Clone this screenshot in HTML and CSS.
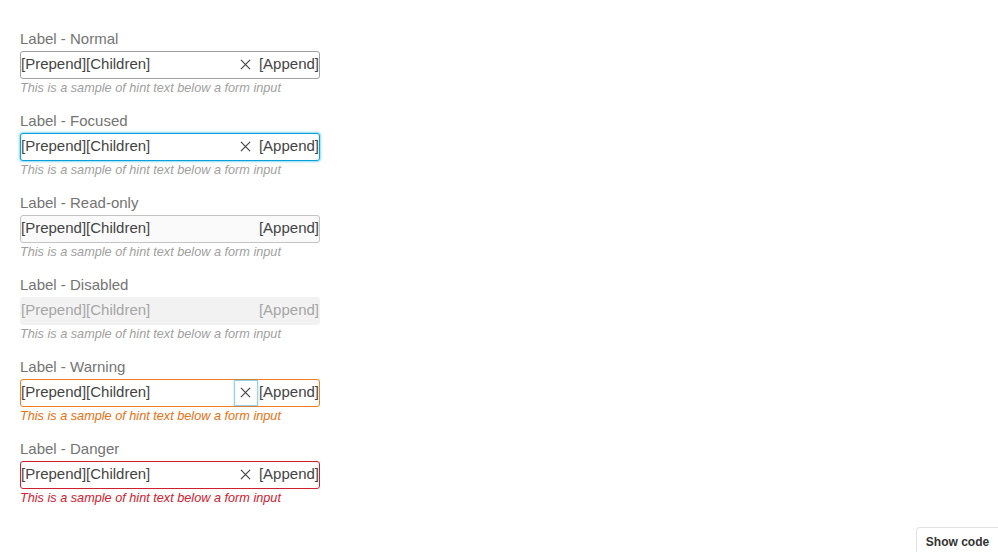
FILE: index.html
```html
<!DOCTYPE html>
<html>
<head>
<meta charset="utf-8">
<link rel="stylesheet" href="styles.css">
</head>
<body>
<div class="page">
  <div class="group">
    <div class="label">Label - Normal</div>
    <div class="field">
      <span class="text">[Prepend][Children]</span>
      <span class="clear"><svg viewBox="0 0 12 12" width="12" height="12"><path d="M1 1L11 11M11 1L1 11" stroke="currentColor" stroke-width="1.3" fill="none"/></svg></span>
      <span class="append">[Append]</span>
    </div>
    <div class="hint">This is a sample of hint text below a form input</div>
  </div>
  <div class="group">
    <div class="label">Label - Focused</div>
    <div class="field focused">
      <span class="text">[Prepend][Children]</span>
      <span class="clear"><svg viewBox="0 0 12 12" width="12" height="12"><path d="M1 1L11 11M11 1L1 11" stroke="currentColor" stroke-width="1.3" fill="none"/></svg></span>
      <span class="append">[Append]</span>
    </div>
    <div class="hint">This is a sample of hint text below a form input</div>
  </div>
  <div class="group">
    <div class="label">Label - Read-only</div>
    <div class="field readonly">
      <span class="text">[Prepend][Children]</span>
      <span class="append">[Append]</span>
    </div>
    <div class="hint">This is a sample of hint text below a form input</div>
  </div>
  <div class="group">
    <div class="label">Label - Disabled</div>
    <div class="field disabled">
      <span class="text">[Prepend][Children]</span>
      <span class="append">[Append]</span>
    </div>
    <div class="hint">This is a sample of hint text below a form input</div>
  </div>
  <div class="group">
    <div class="label">Label - Warning</div>
    <div class="field warning">
      <span class="text">[Prepend][Children]</span>
      <span class="clear ring"><svg viewBox="0 0 12 12" width="12" height="12"><path d="M1 1L11 11M11 1L1 11" stroke="currentColor" stroke-width="1.3" fill="none"/></svg></span>
      <span class="append">[Append]</span>
    </div>
    <div class="hint hint-warning">This is a sample of hint text below a form input</div>
  </div>
  <div class="group">
    <div class="label">Label - Danger</div>
    <div class="field danger">
      <span class="text">[Prepend][Children]</span>
      <span class="clear"><svg viewBox="0 0 12 12" width="12" height="12"><path d="M1 1L11 11M11 1L1 11" stroke="currentColor" stroke-width="1.3" fill="none"/></svg></span>
      <span class="append">[Append]</span>
    </div>
    <div class="hint hint-danger">This is a sample of hint text below a form input</div>
  </div>
</div>
<button class="show-code">Show code</button>
</body>
</html>
```
FILE: styles.css
```css
html, body {
  margin: 0;
  background: #fff;
  font-family: "Liberation Sans", Arial, sans-serif;
}
.page {
  padding: 29px 20px;
  width: 300px;
}
.group {
  margin-bottom: 15px;
}
.label {
  font-size: 15px;
  line-height: 20px;
  color: #747474;
  margin-bottom: 2px;
}
.field {
  box-sizing: border-box;
  height: 28px;
  border: 1px solid #a0a0a0;
  border-radius: 3px;
  display: flex;
  align-items: center;
  padding-bottom: 3px;
  font-size: 15px;
  color: #444;
  background: #fff;
}
.text {
  flex: 1;
  white-space: nowrap;
}
.clear {
  display: flex;
  align-items: center;
  justify-content: center;
  width: 24px;
  height: 26px;
  margin-bottom: -3px;
  padding-bottom: 1px;
  color: #444;
  box-sizing: border-box;
}
.clear svg {
  width: 11px;
  height: 11px;
}
.clear.ring {
  border: 1px solid #8fd3ef;
  box-shadow: 0 0 2px rgba(0, 160, 220, 0.35);
}
.append {
  margin-left: 1px;
  white-space: nowrap;
}
.focused {
  border-color: #0a9fd8;
  box-shadow: 0 0 2px 1px rgba(0, 170, 230, 0.45);
}
.readonly {
  background: #fafafa;
  border-color: #c4c4c4;
}
.disabled {
  background: #f2f2f2;
  border-color: #f2f2f2;
  color: #a6a6a6;
}
.warning {
  border-color: #f57c1f;
}
.danger {
  border-color: #cf2030;
}
.hint {
  font-size: 12.7px;
  line-height: 16px;
  padding-top: 1px;
  font-style: italic;
  color: #a0a0a0;
}
.hint-warning {
  color: #e8700f;
}
.hint-danger {
  color: #cf2030;
}
.show-code {
  position: absolute;
  right: 0;
  bottom: 0;
  width: 82px;
  height: 25px;
  border: 1px solid #e2e2e2;
  border-right: none;
  border-bottom: none;
  border-radius: 4px 0 0 0;
  background: #fff;
  font-family: "Liberation Sans", Arial, sans-serif;
  font-size: 12px;
  font-weight: bold;
  color: #333;
  padding: 3px 0 0 0;
}
```
